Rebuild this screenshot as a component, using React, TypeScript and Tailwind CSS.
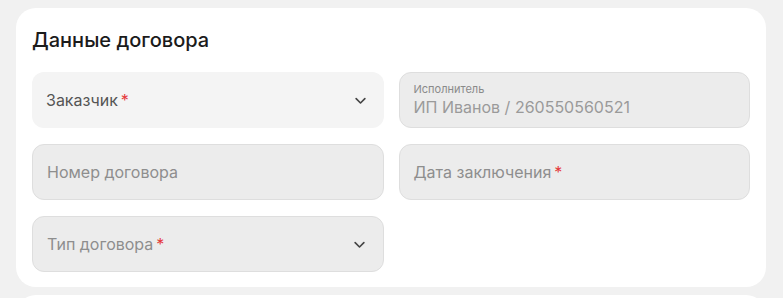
import React from 'react';

const Chevron: React.FC = () => (
  <svg width="15" height="15" viewBox="0 0 24 24" fill="none" stroke="#444" strokeWidth="2.6" strokeLinecap="round" strokeLinejoin="round">
    <path d="M5 9l7 7 7-7" />
  </svg>
);

const Req: React.FC = () => <span className="text-[#e5383b] ml-[3px]">*</span>;

const App: React.FC = () => {
  return (
    <div className="w-[783px] h-[298px] overflow-hidden bg-[#f1f1f1] pt-2 pl-4 pr-[17px]" style={{ fontFamily: 'Inter, "Noto Sans", sans-serif' }}>
      <div className="bg-white rounded-[20px] px-4 pt-5 pb-[15px]">
        <h2 className="text-[20px] leading-6 font-medium text-[#1b1b1b] mb-5">Данные договора</h2>
        <div className="grid grid-cols-2 gap-x-[15px] gap-y-4">
          <div className="h-14 rounded-xl bg-[#f4f4f4] pl-[14px] pr-[16px] flex items-center justify-between">
            <span className="text-[16px] text-[#555]">Заказчик<Req /></span>
            <Chevron />
          </div>
          <div className="h-14 rounded-xl bg-[#ececec] border border-[#dedede] px-[14px] flex flex-col justify-center">
            <span className="text-[11px] leading-[14px] text-[#8a8a8a]">Исполнитель</span>
            <span className="text-[16px] leading-[22px] text-[#9a9a9a]">ИП Иванов / 260550560521</span>
          </div>
          <div className="h-14 rounded-xl bg-[#ececec] border border-[#dedede] px-[14px] flex items-center">
            <span className="text-[16px] text-[#8e8e8e]">Номер договора</span>
          </div>
          <div className="h-14 rounded-xl bg-[#ececec] border border-[#dedede] px-[14px] flex items-center">
            <span className="text-[16px] text-[#8e8e8e]">Дата заключения<Req /></span>
          </div>
          <div className="h-14 rounded-xl bg-[#ececec] border border-[#dedede] pl-[14px] pr-[16px] flex items-center justify-between">
            <span className="text-[16px] text-[#8e8e8e]">Тип договора<Req /></span>
            <Chevron />
          </div>
        </div>
      </div>
      <div className="bg-white rounded-[20px] h-10 mt-2" />
    </div>
  );
};

export default App;
